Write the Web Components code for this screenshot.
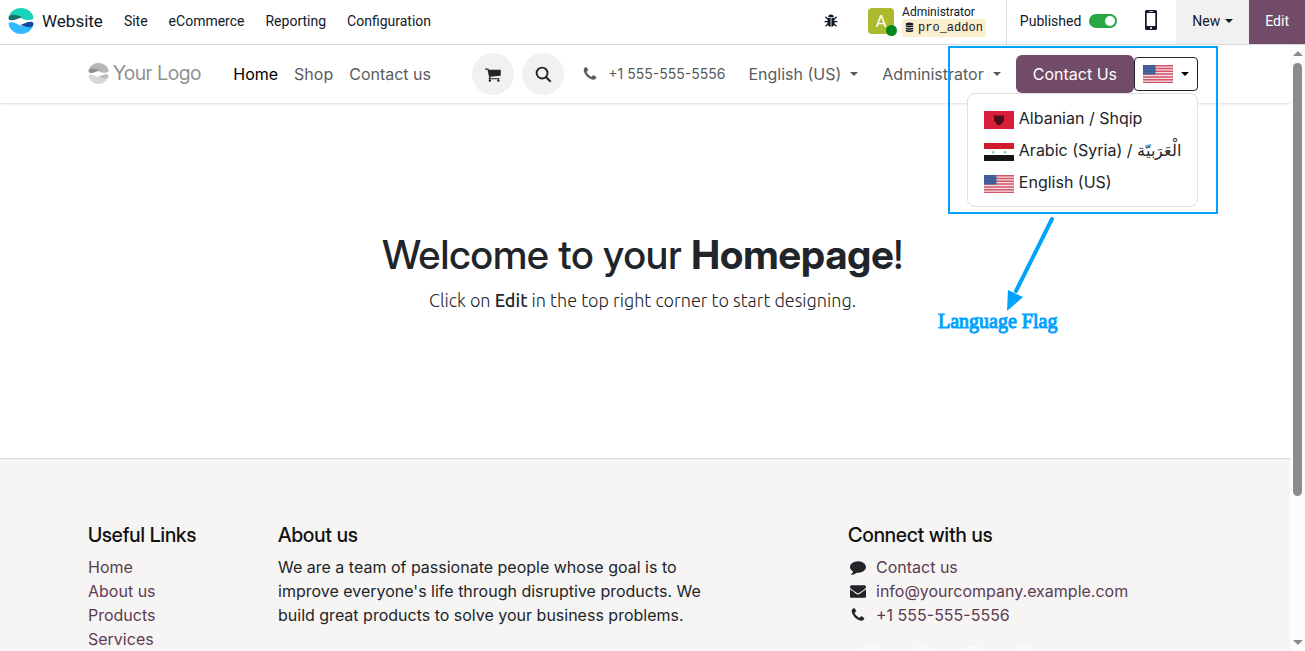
<!DOCTYPE html>
<html lang="en">
<head>
<meta charset="utf-8">
<meta name="viewport" content="width=device-width, initial-scale=1">
<title>Home | My Website</title>
<style>
html, body { margin: 0; height: 100%; }
body { background: #fff; color: #212529; font: 16px/24px Inter, "Noto Sans", sans-serif; overflow: hidden; }
</style>
</head>
<body>
<website-app></website-app>

<script>
const BASE = `*{box-sizing:border-box}a{color:inherit;text-decoration:none}button{font:inherit;color:inherit;border:0;background:none;padding:0;margin:0;cursor:pointer}svg{display:block;flex:none}`;

function define(name, css, html, after) {
  const template = document.createElement('template');
  template.innerHTML = `<style>${BASE}${css}</style>${html}`;
  customElements.define(name, class extends HTMLElement {
    constructor() {
      super();
      this.attachShadow({ mode: 'open' }).append(template.content.cloneNode(true));
    }
    connectedCallback() { if (after) after(this, this.shadowRoot); }
  });
}

const ICONS = {
  cart: ['0 0 1792 1792', '<path d="M640 1536q0 52-38 90t-90 38-90-38-38-90 38-90 90-38 90 38 38 90zm896 0q0 52-38 90t-90 38-90-38-38-90 38-90 90-38 90 38 38 90zm128-1088v512q0 24-16.5 42.5t-40.5 21.5l-1044 122q13 60 13 70 0 16-24 64h920q26 0 45 19t19 45-19 45-45 19h-1024q-26 0-45-19t-19-45q0-11 8-31.5t16-36 21.5-40 15.5-29.5l-177-823h-204q-26 0-45-19t-19-45 19-45 45-19h256q16 0 28.5 6.5t19.5 15.5 13 24.5 8 26 5.5 29.5 4.5 26h1201q26 0 45 19t19 45z"/>'],
  search: ['0 0 18 18', '<g fill="none" stroke="currentColor" stroke-width="2"><circle cx="7.5" cy="7.5" r="5.8"/><path d="M11.6 11.6l5 5" stroke-width="2.2"/></g>'],
  phone: ['0 0 1792 1792', '<path d="M1600 1240q0 27-10 70.5t-21 68.5q-21 50-122 106-94 51-186 51-27 0-53-3.5t-57.5-12.5-47-14.5-55.5-20.5-49-18q-98-35-175-83-127-79-264-216t-216-264q-48-77-83-175-3-9-18-49t-20.5-55.5-14.5-47-12.5-57.5-3.5-53q0-92 51-186 56-101 106-122 25-11 68.5-21t70.5-10q14 0 21 3 18 6 53 76 11 19 30 54t35 63.5 31 53.5q3 4 17.5 25t21.5 35.5 7 28.5q0 20-28.5 50t-62 55-62 53-28.5 46q0 9 5 22.5t8.5 20.5 14 24 11.5 19q76 137 174 235t235 174q2 1 19 11.5t24 14 20.5 8.5 22.5 5q18 0 46-28.5t53-62 55-62 50-28.5q14 0 28.5 7t35.5 21.5 25 17.5q25 15 53.5 31t63.5 35 54 30q70 35 76 53 3 7 3 21z"/>'],
  comment: ['0 0 1792 1792', '<path d="M1792 896q0 174-120 321.5t-326 233-450 85.5q-70 0-145-8-198 175-460 242-49 14-114 22-17 2-30.5-9t-17.5-29v-1q-3-4-.5-12t2-10 4.5-9.5l6-9 7-8.5 8-9q7-8 31-34.5t34.5-38 31-39.5 32.5-51 27-59 26-76q-157-89-247.5-220t-90.5-281q0-130 71-248.5t191-204.5 286-136.5 348-50.5q244 0 450 85.5t326 233 120 321.5z"/>'],
  envelope: ['0 0 1792 1792', '<path d="M1792 710v794q0 66-47 113t-113 47h-1472q-66 0-113-47t-47-113v-794q44 49 101 87 362 246 497 345 57 42 92.5 65.5t94.5 48 110 24.5h2q51 0 110-24.5t94.5-48 92.5-65.5q170-123 498-345 57-39 100-87zm0-294q0 79-49 151t-122 123q-376 261-468 325-10 7-42.5 31t-54 38.5-52 32.5-57.5 27-50 9h-2q-23 0-50-9t-57.5-27-52-32.5-54-38.5-42.5-31q-91-64-262-182.5t-205-142.5q-62-42-117-115.5t-55-136.5q0-78 41.5-130t118.5-52h1472q65 0 112.5 47t47.5 113z"/>'],
  bug: ['0 0 14 14', '<path d="M4.2 3.2a2.8 2.8 0 0 1 5.6 0zM3.6 4h3v8.8C4.600 12.700 3.500 11.400 3.500 9.500zM7.400 4h3l.1 5.500c0 1.900-1.100 3.200-3.100 3.300z"/><path d="M1.300 2.800L4 5.300M12.700 2.800L10 5.300M.5 7.600h3.500M13.500 7.600H10M1.500 12.300l2.800-2.600M12.500 12.300L9.700 9.700" stroke="currentColor" stroke-width="1.200" fill="none"/>'],
  database: ['0 0 12 14', '<ellipse cx="6" cy="2.200" rx="5" ry="2"/><path d="M1 3.900c2 1.400 8 1.400 10 0v1.500c-1 2-9 2-10 0zM1 7c2 1.400 8 1.400 10 0v1.500c-1 2-9 2-10 0zM1 10.100c2 1.400 8 1.400 10 0v1.500c-1 2-9 2-10 0z"/>'],
  mobile: ['0 0 14 22', '<path fill-rule="evenodd" d="M2.500 1h9A1.500 1.500 0 0 1 13 2.500v17a1.500 1.500 0 0 1-1.500 1.500h-9A1.500 1.500 0 0 1 1 19.500v-17A1.500 1.500 0 0 1 2.500 1zM2.700 4v13h8.600V4zM5 2.100v.7h4v-.7zM7 18a1 1 0 1 0 0 2 1 1 0 0 0 0-2z"/>'],
  caret: ['0 0 8 4', '<path d="M0 0h8L4 4z"/>']
};

/* Single-colour glyph: <ui-icon name="phone"> */
define('ui-icon', `:host{display:inline-flex;flex:none;width:16px;height:16px}:host([name=caret]){width:8px;height:4px}svg{width:100%;height:100%;fill:currentColor}`,
  `<svg aria-hidden="true"></svg>`, (host, root) => {
    const [box, body] = ICONS[host.getAttribute('name')];
    const svg = root.querySelector('svg');
    svg.setAttribute('viewBox', box);
    svg.innerHTML = body;
  });

/* Round two-wave mark; colours come from custom properties */
define('wave-mark', `:host{display:inline-flex;flex:none;width:26px;height:26px}svg{width:100%;height:100%}`,
  `<svg viewBox="0 0 26 26" aria-hidden="true">
    <path fill="var(--top,#1ad3bb)" d="M1 8C3 3 7.500 0 13 0c6 0 11 3.600 12.600 9.200C26 11 24 11.800 21 12c-5 .3-8-2.500-13-4.300C5 6.700 3 6.800 1 8z"/>
    <path fill="var(--top-dark,#1a6f66)" d="M1 8c4-2.500 9-.5 13 1.200C10 10.500 7 12.400 3.500 12.300 1 12.200 0 11 1 8z"/>
    <path fill="var(--bottom,#30b9ff)" d="M.5 15.500C2 13.500 5 14 8 15.500c5 2.500 9 4 17 2.500C23 23 18.500 26 13 26 6.500 26 1.500 21.500.5 15.500z"/>
    <path fill="var(--bottom-dark,#17479e)" d="M12.500 16.800C16 16 19 13.700 22.500 13.800c3 0 3.500 1.700 2.500 4.200-3 2.500-8 .8-12.500-1.200z"/>
  </svg>`);

const FLAGS = {
  us: `<rect width="30" height="18" fill="#f3dfe2"/><path stroke="#d5546a" stroke-width="1.500" d="M0 .7h30M0 3.500h30M0 6.300h30M0 9.100h30M0 11.900h30M0 14.700h30M0 17.400h30"/><rect width="12.500" height="9.500" fill="#3d5c93"/><path stroke="#6f88b3" stroke-width=".7" stroke-dasharray=".8 1.200" d="M1 2h11M1 4.700h11M1 7.400h11"/>`,
  al: `<rect width="30" height="18" fill="#d81e3a"/><path fill="#4b0f18" d="M10 4l3 1 1-1 1 1.200 1-1.200 1 1 3-1-.2 6-1.400 1.200-.8 1.800-2.600 1.500-2.600-1.500-.8-1.800-1.400-1.200z"/>`,
  sy: `<rect width="30" height="18" fill="#fff"/><rect width="30" height="6" fill="#d01c2d"/><rect y="12" width="30" height="6" fill="#151515"/><path fill="#8ed0ac" d="M9 7l.6 1.400 1.500.1-1.100 1 .4 1.500L9 10.200 7.600 11 8 9.500l-1.100-1 1.500-.1zM21 7l.6 1.400 1.500.1-1.100 1 .4 1.500-1.400-.8-1.400.8.400-1.500-1.100-1 1.500-.1z"/>`
};
define('country-flag', `:host{display:inline-flex;flex:none;width:30px;height:18px}svg{width:100%;height:100%}`,
  `<svg viewBox="0 0 30 18" aria-hidden="true"></svg>`, (host, root) => {
    root.querySelector('svg').innerHTML = FLAGS[host.getAttribute('code')];
  });

define('published-switch', `
  :host{display:flex}
  label{display:flex;align-items:center;gap:8px;cursor:pointer}
  input{appearance:none;margin:0;width:28px;height:14px;border-radius:7px;background:#ced4da;position:relative;cursor:pointer}
  input:checked{background:#28a745}
  input::after{content:"";position:absolute;top:2px;left:2px;width:10px;height:10px;border-radius:50%;background:#fff}
  input:checked::after{left:16px}`,
  `<label>Published<input type="checkbox" role="switch" checked></label>`);

define('admin-bar', `
  :host{display:flex;height:45px;border-bottom:1px solid #d8dadd;color:#111827;background:#fff;font:14px/20px Roboto,sans-serif;flex:none}
  nav{display:flex;align-items:center;gap:21px;padding:0 0 2px 8px}
  .brand{display:flex;align-items:center;gap:8px;font-size:17px}
  .tools{display:flex;margin-left:auto;align-items:stretch}
  .bug{display:flex;align-items:center;padding:0 30px 2px}
  .bug ui-icon{width:14px;height:14px}
  .user{display:flex;align-items:center;gap:8px;padding:0 20px 3px 0;text-align:left}
  .avatar{display:grid;place-items:center;width:26px;height:26px;border-radius:4px;background:#adb92f;color:#fff;font-size:17px;position:relative}
  .avatar::after{content:"";position:absolute;right:-3px;bottom:-2px;width:11px;height:11px;border-radius:50%;background:#00881d}
  .who{display:block;font-size:12px;line-height:14px}
  .db{display:flex;align-items:center;gap:4px;padding:0 3px;height:18px;background:#fcefcf;font:12px/18px "Liberation Mono",monospace}
  .db ui-icon{width:9px;height:11px}
  .pub{display:flex;align-items:center;gap:27px;border-left:1px solid #d8dadd;padding:0 18px 2px 13px}
  .mob{padding-top:2px}
  .mob ui-icon{width:14px;height:22px}
  .new{display:flex;align-items:center;gap:5px;padding:0 16px 2px 16px;background:#f1f1f1}
  .edit{background:#714b67;color:#fff;padding:0 16px 2px}`,
  `<nav aria-label="Backend">
    <a class="brand" href="#"><wave-mark></wave-mark>Website</a>
    <a href="#site">Site</a><a href="#ecommerce">eCommerce</a><a href="#reporting">Reporting</a><a href="#configuration">Configuration</a>
  </nav>
  <div class="tools">
    <button class="bug" aria-label="Developer tools"><ui-icon name="bug"></ui-icon></button>
    <button class="user"><span class="avatar">A</span><span><span class="who">Administrator</span><span class="db"><ui-icon name="database"></ui-icon>pro_addon</span></span></button>
    <div class="pub"><published-switch></published-switch><button class="mob" aria-label="Mobile preview"><ui-icon name="mobile"></ui-icon></button></div>
    <button class="new">New<ui-icon name="caret"></ui-icon></button>
    <button class="edit">Edit</button>
  </div>`);

define('language-picker', `
  :host{display:block;position:relative}
  .toggle{display:flex;align-items:center;gap:8px;width:64px;height:34px;padding:0 8px;border:1px solid #212529;border-radius:4px;background:#fff;color:#000}
  ul{position:absolute;z-index:2;right:0;top:36px;margin:0;padding:8px 0;list-style:none;background:#fff;border:1px solid #dee0e2;border-radius:8px;color:#212529;white-space:nowrap}
  li a{display:flex;align-items:center;gap:5px;height:32px;padding:0 16px}
  li country-flag{align-self:flex-end;margin-bottom:5px}`,
  `<button class="toggle" aria-label="Language" aria-expanded="true"><country-flag code="us"></country-flag><ui-icon name="caret"></ui-icon></button>
  <ul>
    <li><a href="#sq"><country-flag code="al"></country-flag><span>Albanian / Shqip</span></a></li>
    <li><a href="#ar"><country-flag code="sy"></country-flag><span>Arabic (Syria) / الْعَرَبيّة</span></a></li>
    <li><a href="#en"><country-flag code="us"></country-flag><span>English (US)</span></a></li>
  </ul>
  <slot></slot>`);

/* Callout: frame, arrow and caption laid over the page beside the language picker */
define('flag-callout', `
  :host{position:absolute;z-index:3;right:-20px;top:-11px;width:280px;color:#00a2ff;pointer-events:none}
  .frame{margin-left:10px;height:168px;border:2px solid currentColor}
  svg{margin-left:60px}
  .caption{font:20px/20px "Liberation Serif",serif;-webkit-text-stroke:1px currentColor}`,
  `<div class="frame"></div>
  <svg width="70" height="97" viewBox="0 0 70 97" aria-hidden="true"><path d="M54 5L18 77" stroke="currentColor" stroke-width="4" stroke-linecap="round"/><path d="M10 76l15 7L9 97z" fill="currentColor"/></svg>
  <div class="caption"><slot></slot></div>`);

define('site-header', `
  :host{display:block;height:59px;border-bottom:1px solid #e9e9e9;box-shadow:0 1px 2px #0001;background:#fff;position:relative;z-index:1;color:#595c5f}
  .bar{display:flex;align-items:center;height:100%;max-width:1140px;margin:0 auto;padding:0 17px 0 13px;white-space:nowrap}
  .logo{display:flex;align-items:center;gap:4px;padding-bottom:2px;font:20px/24px "Inter Display","Inter Tight",Lato,sans-serif;color:#8f8f8f;margin-right:32px;--top:#b7b7b7;--top-dark:#8d8d8d;--bottom:#d8d8d8;--bottom-dark:#bcbcbc}
  .logo wave-mark{width:21px;height:21px}
  nav{display:flex;gap:16px}
  nav [aria-current]{color:#000}
  .right{display:flex;align-items:center;margin-left:auto}
  .round{display:grid;place-items:center;width:42px;height:42px;border-radius:50%;background:#f1f1f1;color:#212529;margin-right:8px}
  .round ui-icon{width:17px;height:17px}
  .phone{display:flex;align-items:center;gap:10px;margin:0 23px 0 10px;font-size:14px}
  .menu{display:flex;align-items:center;gap:9px;margin-right:24px}
  .user{margin-right:15px}
  .cta{height:38px;padding:0 17px;border-radius:6px;background:#714b67;color:#fff}`,
  `<div class="bar">
    <a class="logo" href="#"><wave-mark></wave-mark>Your Logo</a>
    <nav aria-label="Main"><a href="#" aria-current="page">Home</a><a href="#shop">Shop</a><a href="#contact">Contact us</a></nav>
    <div class="right">
      <button class="round" aria-label="Cart"><ui-icon name="cart"></ui-icon></button>
      <button class="round" aria-label="Search"><ui-icon name="search"></ui-icon></button>
      <a class="phone" href="tel:+15555555556"><ui-icon name="phone"></ui-icon>+1 555-555-5556</a>
      <button class="menu">English (US)<ui-icon name="caret"></ui-icon></button>
      <button class="menu user">Administrator<ui-icon name="caret"></ui-icon></button>
      <button class="cta">Contact Us</button>
      <language-picker><flag-callout>Language Flag</flag-callout></language-picker>
    </div>
  </div>`);

define('welcome-hero', `
  :host{display:block;padding:127px 17px 145px 12px;text-align:center}
  h1{margin:0 0 8px;font-family:"Inter Display","Inter Tight",Inter,sans-serif;font-size:40px;line-height:48px;font-weight:500}
  b{font-weight:700}
  p{margin:0;font:300 18px/26px Ubuntu,"Noto Sans","Open Sans",sans-serif}
  p b{font-weight:500}`,
  `<h1>Welcome to your <b>Homepage</b>!</h1><p>Click on <b>Edit</b> in the top right corner to start designing.</p>`);

define('footer-column', `
  :host{display:block;padding:0 11px 0 13px}
  h5{margin:0 0 8px;font-family:"Inter Display","Inter Tight",Inter,sans-serif;font-size:20px;line-height:24px;font-weight:500;color:#111}`,
  `<h5><slot name="title"></slot></h5><slot></slot>`);

define('site-footer', `
  :host{display:block;border-top:1px solid #d5d6d7;background:#f6f5f4}
  .row{display:grid;grid-template-columns:2fr 5fr 1fr 4fr;max-width:1140px;margin:0 auto;padding:64px 0}
  .connect{grid-column:4}
  ul{margin:0;padding:0;list-style:none}
  a{color:#5b3c53}
  p{margin:0}
  .contact{display:flex;align-items:center;gap:10px;padding-left:2px;color:#212529}
  .social{display:flex;gap:5px;margin-top:19px}
  .social a{width:46px;height:46px;border-radius:50%;background:#fafafa}`,
  `<div class="row">
    <footer-column><span slot="title">Useful Links</span><ul><li><a href="#">Home</a></li><li><a href="#about">About us</a></li><li><a href="#products">Products</a></li><li><a href="#services">Services</a></li></ul></footer-column>
    <footer-column><span slot="title">About us</span><p>We are a team of passionate people whose goal is to improve everyone's life through disruptive products. We build great products to solve your business problems.</p></footer-column>
    <footer-column class="connect"><span slot="title">Connect with us</span>
      <ul>
        <li class="contact"><ui-icon name="comment"></ui-icon><a href="#contact">Contact us</a></li>
        <li class="contact"><ui-icon name="envelope"></ui-icon><a href="mailto:info@yourcompany.example.com">info@yourcompany.example.com</a></li>
        <li class="contact"><ui-icon name="phone"></ui-icon><a href="tel:+15555555556">+1 555-555-5556</a></li>
      </ul>
      <div class="social"><a href="#facebook" aria-label="Facebook"></a><a href="#x" aria-label="X"></a><a href="#linkedin" aria-label="LinkedIn"></a><a href="#instagram" aria-label="Instagram"></a></div>
    </footer-column>
  </div>`);

define('scroll-rail', `
  :host{display:flex;flex-direction:column;align-items:center;width:15px;flex:none;padding:6px 0;background:#fcfcfc;color:#8b8b8b}
  ui-icon[name]{width:10px;height:5px}
  .up{transform:rotate(180deg)}
  .track{flex:1;width:9px;margin:7px 0}
  .thumb{height:76%;border-radius:5px;background:#8b8b8b}`,
  `<ui-icon class="up" name="caret"></ui-icon><div class="track"><div class="thumb"></div></div><ui-icon name="caret"></ui-icon>`);

define('website-app', `
  :host{display:flex;flex-direction:column;height:100vh}
  .view{display:flex;flex:1;min-height:0}
  .page{flex:1;min-width:0;overflow:hidden}`,
  `<admin-bar></admin-bar>
  <div class="view"><div class="page"><site-header></site-header><main><welcome-hero></welcome-hero></main><site-footer></site-footer></div><scroll-rail></scroll-rail></div>`);
</script>
</body>
</html>
